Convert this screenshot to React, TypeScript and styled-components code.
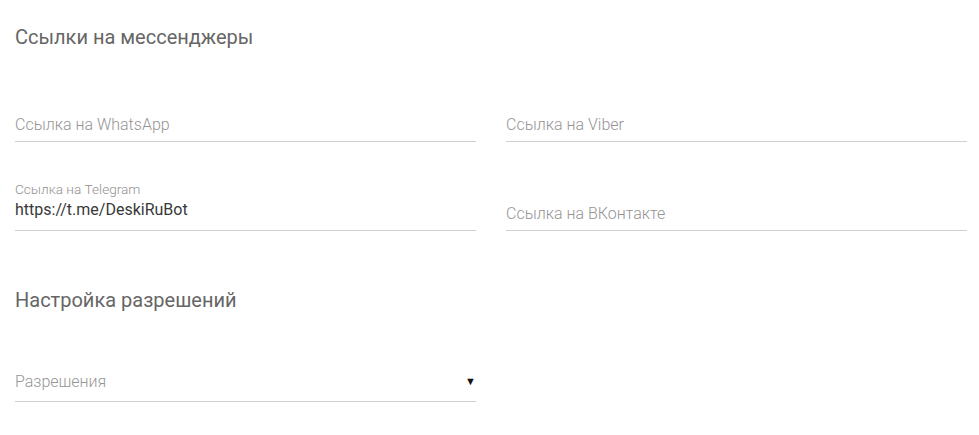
import styled, { createGlobalStyle } from "styled-components";
import { FC } from "react";

const GlobalStyle = createGlobalStyle`
    body {
        margin: 0;
        background: #fff;
        font-family: Roboto, "Noto Sans", Arial, sans-serif;
    }
`;

const Page = styled.div`
    padding: 0 12px 40px 15px;
`;

type HeadingProps = {
    offset: number;
};

const SectionTitle = styled.h3<HeadingProps>`
    margin: ${(props) => props.offset}px 0 0;
    font-size: 20px;
    line-height: 24px;
    font-weight: 400;
    color: #666;
`;

const FieldsGrid = styled.div`
    display: grid;
    grid-template-columns: 1fr 1fr;
    column-gap: 30px;
    row-gap: 28px;
    margin-top: 32px;
`;

const FieldBox = styled.div`
    box-sizing: border-box;
    height: 61px;
    display: flex;
    flex-direction: column;
    justify-content: flex-end;
    border-bottom: 1px solid #d0d0d0;
`;

const FloatLabel = styled.label`
    font-size: 13.6px;
    line-height: 16px;
    font-weight: 300;
    color: #919191;
    margin-bottom: 3px;
`;

const Placeholder = styled.span`
    font-size: 16px;
    line-height: 20px;
    font-weight: 300;
    color: #959595;
    padding-bottom: 6px;
`;

const Value = styled.span`
    font-size: 16px;
    line-height: 20px;
    font-weight: 400;
    color: #383838;
    padding-bottom: 10px;
`;

const SelectBox = styled.div`
    box-sizing: border-box;
    width: calc((100% - 30px) / 2);
    height: 61px;
    margin-top: 29px;
    display: flex;
    align-items: flex-end;
    justify-content: space-between;
    border-bottom: 1px solid #d0d0d0;
    cursor: pointer;

    span {
        font-size: 16px;
        line-height: 20px;
        font-weight: 300;
        color: #959595;
        padding-bottom: 9px;
    }

    i {
        font-style: normal;
        font-size: 11px;
        line-height: 20px;
        color: #111;
        padding: 0 0 9px 0;
    }
`;

type FieldProps = {
    label: string;
    value?: string;
};

const TextField: FC<FieldProps> = ({ label, value }) => (
    <FieldBox>
        {value ? (
            <>
                <FloatLabel>{label}</FloatLabel>
                <Value>{value}</Value>
            </>
        ) : (
            <Placeholder>{label}</Placeholder>
        )}
    </FieldBox>
);

const App = () => (
    <>
        <GlobalStyle />
        <Page>
            <SectionTitle offset={25}>Ссылки на мессенджеры</SectionTitle>
            <FieldsGrid>
                <TextField label="Ссылка на WhatsApp" />
                <TextField label="Ссылка на Viber" />
                <TextField label="Ссылка на Telegram" value="https://t.me/DeskiRuBot" />
                <TextField label="Ссылка на ВКонтакте" />
            </FieldsGrid>
            <SectionTitle offset={57}>Настройка разрешений</SectionTitle>
            <SelectBox>
                <span>Разрешения</span>
                <i>▼</i>
            </SelectBox>
        </Page>
    </>
);

export default App;
